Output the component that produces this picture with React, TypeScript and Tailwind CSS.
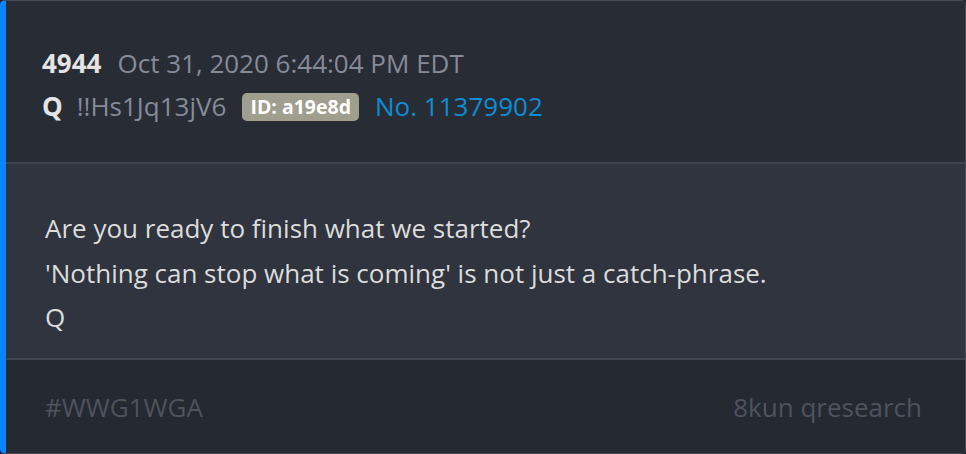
export default function App() {
  return (
    <div
      className="w-[966px] h-[454px] bg-[#1f2228]"
      style={{ fontFamily: '"Open Sans", "Noto Sans", sans-serif' }}
    >
      <div className="flex h-full w-full flex-col overflow-hidden rounded-[5px] border border-[#464b56] border-l-[6px] border-l-[#0a84ff]">
        <div className="h-[161px] shrink-0 bg-[#282c35] pl-[36px] pt-[41px]">
          <div className="flex items-center text-[26px] leading-[43px]">
            <span className="font-bold text-[#e4e4e4]">4944</span>
            <span className="ml-[16px] text-[#868b98]">Oct 31, 2020 6:44:04 PM EDT</span>
          </div>
          <div className="flex items-center text-[26px] leading-[43px]">
            <span className="font-bold text-[#e4e4e4]">Q</span>
            <span className="ml-[14px] text-[#868b98]">!!Hs1Jq13jV6</span>
            <span className="ml-[16px] rounded-[5px] bg-[#a09e8e] px-[8px] text-[19.5px] font-bold leading-[28px] text-white">
              ID: a19e8d
            </span>
            <span className="ml-[16px] text-[#0c8ed6]">No. 11379902</span>
          </div>
        </div>
        <div className="h-[2px] shrink-0 bg-[#3f444e]" />
        <div className="h-[194px] shrink-0 bg-[#2f343e] pl-[39px] pt-[42px] text-[26px] leading-[44.5px] text-[#dcdcdc]">
          <div>Are you ready to finish what we started?</div>
          <div>'Nothing can stop what is coming' is not just a catch-phrase.</div>
          <div>Q</div>
        </div>
        <div className="h-[2px] shrink-0 bg-[#3f444e]" />
        <div className="flex flex-1 items-center justify-between bg-[#252931] pl-[39px] pr-[43px] pt-[2px] text-[26px] text-[#4e535e]">
          <span>#WWG1WGA</span>
          <span>8kun qresearch</span>
        </div>
      </div>
    </div>
  );
}
